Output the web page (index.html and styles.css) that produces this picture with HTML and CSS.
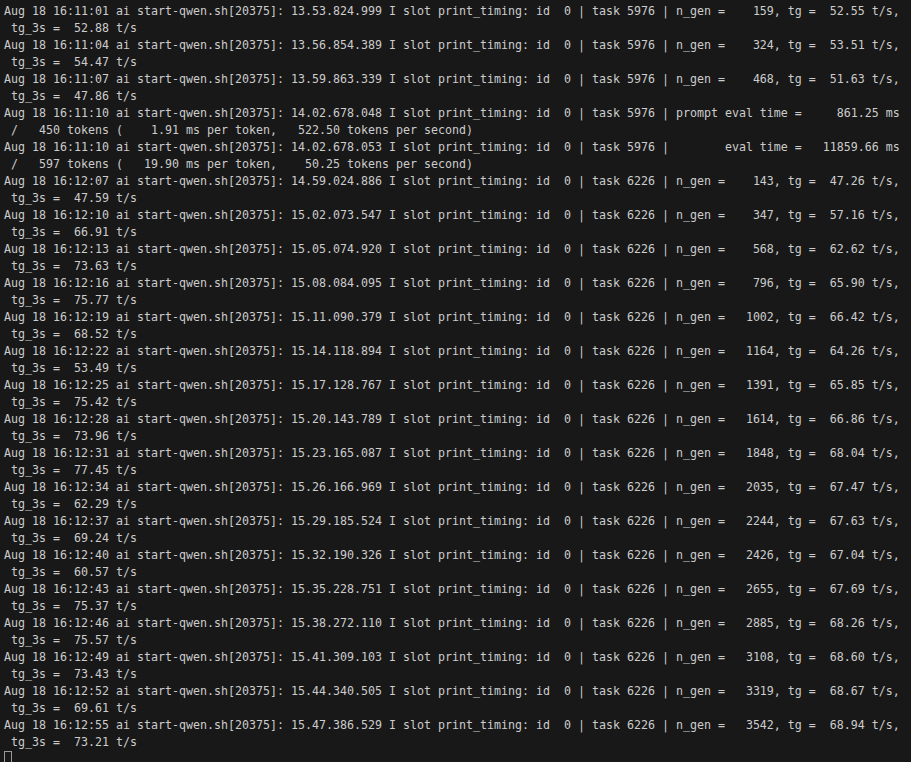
FILE: index.html
```html
<!DOCTYPE html>
<html>
<head>
<meta charset="utf-8">
<link rel="stylesheet" href="styles.css">
</head>
<body>
<div class="term">
<div class="line">Aug 18 16:11:01 ai start-qwen.sh[20375]: 13.53.824.999 I slot print_timing: id  0 | task 5976 | n_gen =    159, tg =  52.55 t/s,</div>
<div class="line"> tg_3s =  52.88 t/s</div>
<div class="line">Aug 18 16:11:04 ai start-qwen.sh[20375]: 13.56.854.389 I slot print_timing: id  0 | task 5976 | n_gen =    324, tg =  53.51 t/s,</div>
<div class="line"> tg_3s =  54.47 t/s</div>
<div class="line">Aug 18 16:11:07 ai start-qwen.sh[20375]: 13.59.863.339 I slot print_timing: id  0 | task 5976 | n_gen =    468, tg =  51.63 t/s,</div>
<div class="line"> tg_3s =  47.86 t/s</div>
<div class="line">Aug 18 16:11:10 ai start-qwen.sh[20375]: 14.02.678.048 I slot print_timing: id  0 | task 5976 | prompt eval time =     861.25 ms</div>
<div class="line"> /   450 tokens (    1.91 ms per token,   522.50 tokens per second)</div>
<div class="line">Aug 18 16:11:10 ai start-qwen.sh[20375]: 14.02.678.053 I slot print_timing: id  0 | task 5976 |        eval time =   11859.66 ms</div>
<div class="line"> /   597 tokens (   19.90 ms per token,    50.25 tokens per second)</div>
<div class="line">Aug 18 16:12:07 ai start-qwen.sh[20375]: 14.59.024.886 I slot print_timing: id  0 | task 6226 | n_gen =    143, tg =  47.26 t/s,</div>
<div class="line"> tg_3s =  47.59 t/s</div>
<div class="line">Aug 18 16:12:10 ai start-qwen.sh[20375]: 15.02.073.547 I slot print_timing: id  0 | task 6226 | n_gen =    347, tg =  57.16 t/s,</div>
<div class="line"> tg_3s =  66.91 t/s</div>
<div class="line">Aug 18 16:12:13 ai start-qwen.sh[20375]: 15.05.074.920 I slot print_timing: id  0 | task 6226 | n_gen =    568, tg =  62.62 t/s,</div>
<div class="line"> tg_3s =  73.63 t/s</div>
<div class="line">Aug 18 16:12:16 ai start-qwen.sh[20375]: 15.08.084.095 I slot print_timing: id  0 | task 6226 | n_gen =    796, tg =  65.90 t/s,</div>
<div class="line"> tg_3s =  75.77 t/s</div>
<div class="line">Aug 18 16:12:19 ai start-qwen.sh[20375]: 15.11.090.379 I slot print_timing: id  0 | task 6226 | n_gen =   1002, tg =  66.42 t/s,</div>
<div class="line"> tg_3s =  68.52 t/s</div>
<div class="line">Aug 18 16:12:22 ai start-qwen.sh[20375]: 15.14.118.894 I slot print_timing: id  0 | task 6226 | n_gen =   1164, tg =  64.26 t/s,</div>
<div class="line"> tg_3s =  53.49 t/s</div>
<div class="line">Aug 18 16:12:25 ai start-qwen.sh[20375]: 15.17.128.767 I slot print_timing: id  0 | task 6226 | n_gen =   1391, tg =  65.85 t/s,</div>
<div class="line"> tg_3s =  75.42 t/s</div>
<div class="line">Aug 18 16:12:28 ai start-qwen.sh[20375]: 15.20.143.789 I slot print_timing: id  0 | task 6226 | n_gen =   1614, tg =  66.86 t/s,</div>
<div class="line"> tg_3s =  73.96 t/s</div>
<div class="line">Aug 18 16:12:31 ai start-qwen.sh[20375]: 15.23.165.087 I slot print_timing: id  0 | task 6226 | n_gen =   1848, tg =  68.04 t/s,</div>
<div class="line"> tg_3s =  77.45 t/s</div>
<div class="line">Aug 18 16:12:34 ai start-qwen.sh[20375]: 15.26.166.969 I slot print_timing: id  0 | task 6226 | n_gen =   2035, tg =  67.47 t/s,</div>
<div class="line"> tg_3s =  62.29 t/s</div>
<div class="line">Aug 18 16:12:37 ai start-qwen.sh[20375]: 15.29.185.524 I slot print_timing: id  0 | task 6226 | n_gen =   2244, tg =  67.63 t/s,</div>
<div class="line"> tg_3s =  69.24 t/s</div>
<div class="line">Aug 18 16:12:40 ai start-qwen.sh[20375]: 15.32.190.326 I slot print_timing: id  0 | task 6226 | n_gen =   2426, tg =  67.04 t/s,</div>
<div class="line"> tg_3s =  60.57 t/s</div>
<div class="line">Aug 18 16:12:43 ai start-qwen.sh[20375]: 15.35.228.751 I slot print_timing: id  0 | task 6226 | n_gen =   2655, tg =  67.69 t/s,</div>
<div class="line"> tg_3s =  75.37 t/s</div>
<div class="line">Aug 18 16:12:46 ai start-qwen.sh[20375]: 15.38.272.110 I slot print_timing: id  0 | task 6226 | n_gen =   2885, tg =  68.26 t/s,</div>
<div class="line"> tg_3s =  75.57 t/s</div>
<div class="line">Aug 18 16:12:49 ai start-qwen.sh[20375]: 15.41.309.103 I slot print_timing: id  0 | task 6226 | n_gen =   3108, tg =  68.60 t/s,</div>
<div class="line"> tg_3s =  73.43 t/s</div>
<div class="line">Aug 18 16:12:52 ai start-qwen.sh[20375]: 15.44.340.505 I slot print_timing: id  0 | task 6226 | n_gen =   3319, tg =  68.67 t/s,</div>
<div class="line"> tg_3s =  69.61 t/s</div>
<div class="line">Aug 18 16:12:55 ai start-qwen.sh[20375]: 15.47.386.529 I slot print_timing: id  0 | task 6226 | n_gen =   3542, tg =  68.94 t/s,</div>
<div class="line"> tg_3s =  73.21 t/s</div>
<div class="line"><span class="cursor"></span></div>
</div>
</body>
</html>
```

FILE: styles.css
```css
html, body {
  margin: 0;
  padding: 0;
  background: #181818;
  height: 100%;
  overflow: hidden;
}

.term {
  height: 762px;
  box-sizing: border-box;
  overflow: hidden;
  padding: 3px 0 0 4px;
  background: #181818;
  color: #cccccc;
  font-family: "DejaVu Sans Mono", "Liberation Mono", monospace;
  font-size: 11.63px;
  line-height: 17px;
}

.line {
  white-space: pre;
  height: 17px;
}

.cursor {
  display: inline-block;
  width: 6px;
  height: 14px;
  border: 1px solid #9a9a9a;
  vertical-align: top;
}
```
